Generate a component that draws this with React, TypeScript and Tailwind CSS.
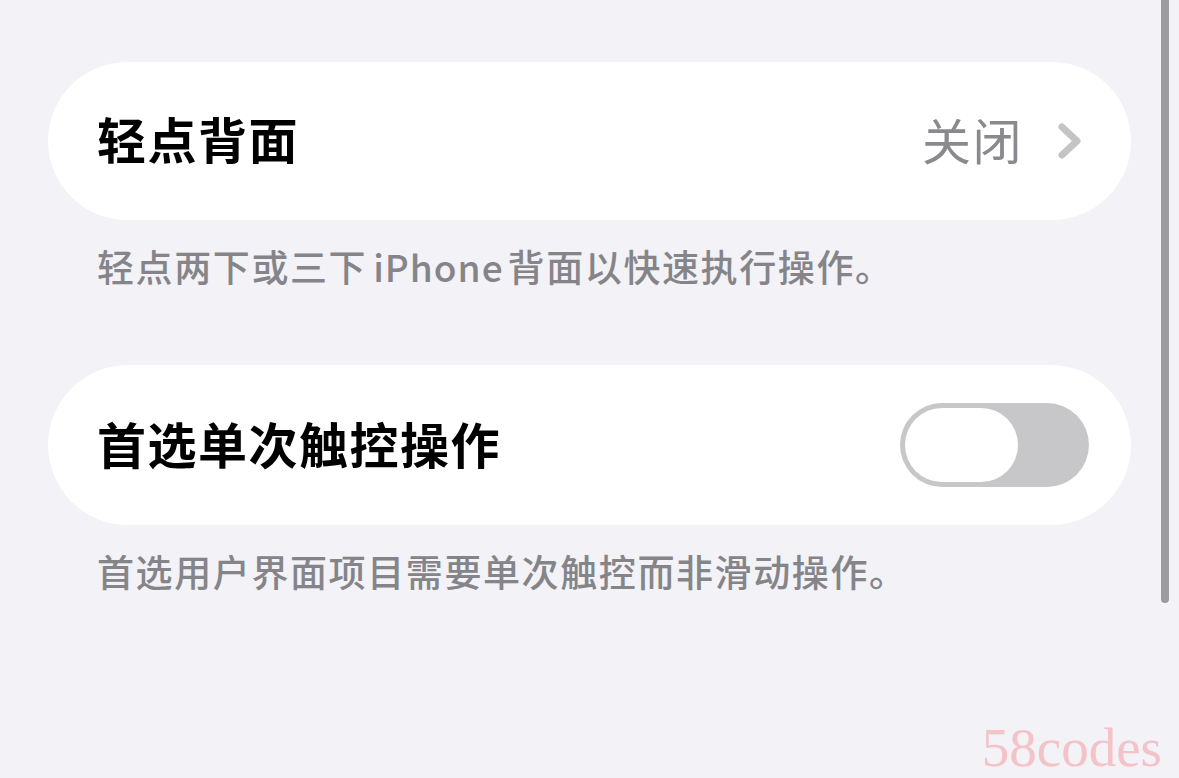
import React from 'react';

const cjk = { fontFamily: '"Noto Sans CJK SC", "Noto Sans", sans-serif' };

const Chevron = () => (
  <svg width="26" height="38" viewBox="0 0 26 38" fill="none">
    <path d="M5 5 L20 19 L5 33" stroke="#c4c4c7" strokeWidth="7" strokeLinecap="round" strokeLinejoin="round" />
  </svg>
);

const Toggle = ({ on }: { on: boolean }) => (
  <div className={`w-[189px] h-[84px] rounded-full p-[5px] flex ${on ? 'bg-[#34c759] justify-end' : 'bg-[#c7c7c9] justify-start'}`}>
    <div className="w-[113px] h-[74px] rounded-full bg-white" />
  </div>
);

export default function App() {
  return (
    <div className="relative w-[1179px] h-[778px] bg-[#f2f2f7] overflow-hidden" style={cjk}>
      <div className="w-[1083px] ml-[48px] pt-[62px]">
        <div className="h-[158px] rounded-full bg-white flex items-center justify-between pl-[49px] pr-[48px]">
          <span className="pb-[7px] text-[49px] font-semibold text-black tracking-[1.5px]">轻点背面</span>
          <div className="flex items-center gap-[34px]">
            <span className="pb-[5px] text-[49px] text-[#8a8a8e] tracking-[1.5px]">关闭</span>
            <Chevron />
          </div>
        </div>
        <p className="mt-[22px] pl-[49px] text-[37px] font-medium leading-[48px] text-[#858589] tracking-[1.6px]">
          轻点两下或三下<span className="pl-[6px] pr-[4px] tracking-[1px]">iPhone</span>背面以快速执行操作。
        </p>

        <div className="mt-[75px] h-[160px] rounded-full bg-white flex items-center justify-between pl-[49px] pr-[42px]">
          <span className="pb-[5px] text-[49px] font-semibold text-black tracking-[1.5px]">首选单次触控操作</span>
          <Toggle on={false} />
        </div>
        <p className="mt-[22px] pl-[49px] text-[37px] font-medium leading-[48px] text-[#858589] tracking-[1.6px]">
          首选用户界面项目需要单次触控而非滑动操作。
        </p>
      </div>

      {/* scroll indicator */}
      <div className="absolute left-[1161px] top-0 w-[8px] h-[603px] rounded-b-full bg-[#9c9c9e]" />

      {/* watermark */}
      <span
        className="absolute right-[17px] bottom-[3px] text-[55px] leading-none text-[#f3c3c7]"
        style={{ fontFamily: '"Liberation Serif", serif' }}
      >
        58codes
      </span>
    </div>
  );
}
